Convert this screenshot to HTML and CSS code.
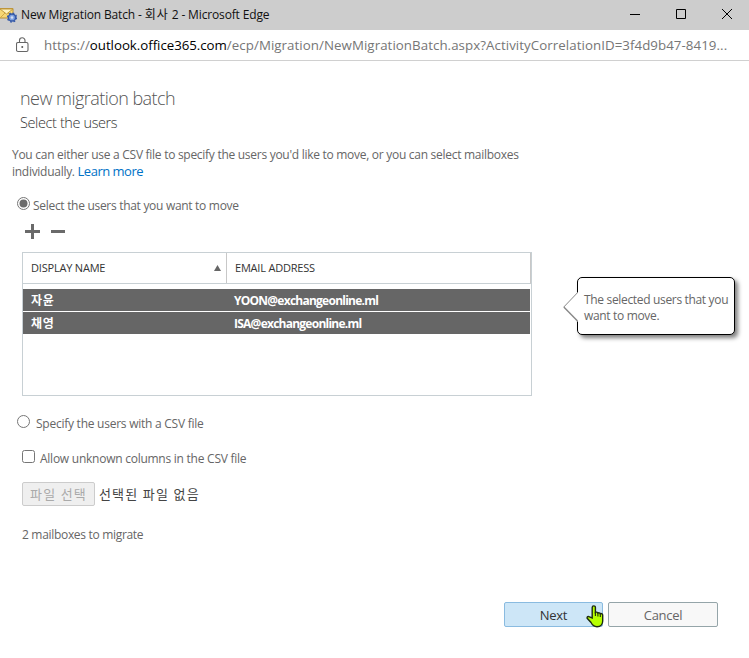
FILE: index.html
```html
<!DOCTYPE html>
<html lang="en">
<head>
<meta charset="utf-8">
<title>New Migration Batch</title>
<link rel="stylesheet" href="styles.css">
</head>
<body>
<header class="titlebar">
  <svg class="app-icon" width="17" height="16" viewBox="0 0 17 16">
    <path d="M-.5 1.500h13.500v9.500H-.5z" fill="#f7d774" stroke="#b89038" stroke-width="1"/>
    <path d="M0 2l6.500 5L13 2z" fill="#fff3bd" stroke="#c29a3c"/>
    <path d="M0 11l5-5M13 11L8 6" stroke="#d0a848" fill="none"/>
    <circle cx="12" cy="10.500" r="3.600" fill="#7fa1df" stroke="#3559a8" stroke-width="1.500"/>
    <circle cx="12" cy="10.500" r="4.500" fill="none" stroke="#3559a8" stroke-width="1.300" stroke-dasharray="1.770 1.770"/>
    <circle cx="12" cy="10.500" r="1.300" fill="#d5dff2"/>
  </svg>
  <span class="window-title">New Migration Batch - <span class="ko">회사</span> 2 - Microsoft Edge</span>
  <svg class="window-controls" width="119" height="30" viewBox="0 0 119 30" fill="none" stroke="#000">
    <path d="M0 14.500h10M46.500 9.500h9v9h-9z"/>
    <path d="M92 9l10 10M102 9L92 19"/>
  </svg>
</header>
<div class="addressbar">
  <svg class="lock" width="13" height="16" viewBox="0 0 13 16" fill="none" stroke="#666">
    <rect x=".5" y="5.500" width="11.500" height="9" rx="1.500" stroke-width="1.100"/>
    <path d="M3.500 5.500V3.500a2.750 2.750 0 0 1 5.500 0v2" stroke-width="1.100"/>
    <circle cx="6.250" cy="10" r="1" fill="#555" stroke="none"/>
  </svg>
  <span class="url">https://<b>outlook.office365.com</b>/ecp/Migration/NewMigrationBatch.aspx?ActivityCorrelationID=3f4d9b47-8419...</span>
</div>
<main class="page">
  <h1>new migration batch</h1>
  <h2>Select the users</h2>
  <p class="intro">You can either use a CSV file to specify the users you'd like to move, or you can select mailboxes<br>individually. <a class="learn">Learn more</a></p>
  <div class="option option-select">
    <svg width="13" height="13" viewBox="0 0 13 13"><circle cx="6.500" cy="6.500" r="6" fill="#fff" stroke="#767676"/><circle cx="6.500" cy="6.500" r="4" fill="#6b6b6b"/></svg>
    <span>Select the users that you want to move</span>
  </div>
  <div class="tools">
    <svg width="41" height="15" viewBox="0 0 41 15" fill="#6a6a6a"><path d="M6 0h3v6h6v3H9v6H6V9H0V6h6zM26 6h14v3H26z"/></svg>
  </div>
  <div class="picker">
    <div class="grid">
      <div class="grid-head">
        <div class="col-name"><span>DISPLAY NAME</span><svg width="7" height="6" viewBox="0 0 7 6"><path d="M3.500 0L7 6H0z" fill="#666"/></svg></div>
        <div class="col-mail"><span>EMAIL ADDRESS</span></div>
      </div>
      <div class="row"><span class="name">자윤</span><span class="mail">YOON@exchangeonline.ml</span></div>
      <div class="row"><span class="name">채영</span><span class="mail">ISA@exchangeonline.ml</span></div>
    </div>
    <aside class="callout">
      <svg class="callout-tip" width="15" height="30" viewBox="0 0 15 30"><path d="M15 0L1 15l14 15z" fill="#fff"/><path d="M14.500 .7L.8 15" fill="none" stroke="#888"/><path d="M.8 15l13.700 14" fill="none" stroke="#888" stroke-width="1.400"/></svg>
      The selected users that you<br>want to move.
    </aside>
  </div>
  <div class="option option-csv">
    <svg width="13" height="13" viewBox="0 0 13 13"><circle cx="6.500" cy="6.500" r="6" fill="#fff" stroke="#767676"/></svg>
    <span>Specify the users with a CSV file</span>
  </div>
  <div class="option option-allow">
    <svg width="13" height="13" viewBox="0 0 13 13"><rect x=".5" y=".5" width="12" height="12" rx="2" fill="#fff" stroke="#767676"/></svg>
    <span>Allow unknown columns in the CSV file</span>
  </div>
  <div class="file"><span class="file-button">파일 선택</span><span class="file-none">선택된 파일 없음</span></div>
  <div class="count">2 mailboxes to migrate</div>
  <footer class="buttons">
    <div class="btn btn-next">Next
      <svg class="hand" width="18" height="23" viewBox="0 0 18 23"><path d="M6.200 13V2.500a1.600 1.600 0 0 1 3.200 0V7.500c1-.7 2-.3 2.500.5 1-.5 2 0 2.300.7 1.400-.5 2.500.3 2.500 1.500V16c0 3-2 5.700-5.700 5.700-3.300 0-4.700-1.700-6-4.200L1.200 13.300c-.5-1.500 1-2.300 2.300-1.500z" fill="#b6ff00" stroke="#1c2b10" stroke-width="1.400"/><path d="M9.400 7v4M11.900 8v3.500M14.300 8.700V12" stroke="#1c2b10" stroke-width="1.100"/></svg>
    </div>
    <div class="btn btn-cancel">Cancel</div>
  </footer>
</main>
</body>
</html>
```
FILE: styles.css
```css
* { box-sizing: border-box; }
body {
  margin: 0;
  width: 749px;
  height: 658px;
  overflow: hidden;
  background: #fff;
  color: #666;
  font: 12px/17px "Open Sans", "Noto Sans CJK KR", sans-serif;
  letter-spacing: -.28px;
  white-space: nowrap;
}
svg { display: block; flex: none; }
.titlebar {
  display: flex;
  align-items: center;
  height: 30px;
  background: #cdcdcd;
  color: #111;
}
.app-icon { margin-top: -1px; }
.window-title { margin: -1px 0 0 4px; font-size: 12px; letter-spacing: -.15px; }
.ko { letter-spacing: 1px; }
.window-controls { margin-left: auto; }
.addressbar {
  display: flex;
  align-items: center;
  height: 31px;
  border-bottom: 1px solid #d0d0d0;
  color: #767676;
}
.lock { margin-left: 16px; }
.url { margin-left: 15px; font-size: 13.300px; letter-spacing: .06px; }
.url b { font-weight: 400; color: #000; letter-spacing: -.04px; }
.page { padding-top: 24px; }
h1, h2 { margin: 0 0 0 20px; font-weight: 300; }
h1 { height: 26px; font-size: 18px; line-height: 26px; color: #555; letter-spacing: -.54px; }
h2 { height: 24px; font-size: 14.500px; line-height: 24px; color: #333; letter-spacing: -.39px; }
.intro { margin: 11px 0 0 12px; height: 34px; }
.learn { color: #0072c6; font-size: 13px; letter-spacing: -.5px; }
.option { display: flex; align-items: flex-start; }
.option-select { margin: 17px 0 0 17px; height: 20px; }
.option-select span { margin: 0 0 0 3px; letter-spacing: -.3px; }
.tools { margin: 7px 0 0 25px; height: 15px; }
.picker { display: flex; margin: 13px 0 0 22px; }
.grid { width: 510px; height: 144px; border: 1px solid #c8d0d4; }
.grid-head { display: flex; height: 31px; margin-bottom: 5px; border-bottom: 1px solid #c8d0d4; border-right: 1px solid #c8c8c8; color: #333; font-size: 11px; line-height: 29px; letter-spacing: -.2px; }
.col-name { display: flex; align-items: center; justify-content: space-between; width: 204px; padding: 0 5px 0 8px; border-right: 1px solid #c8c8c8; }
.col-name span { align-self: flex-start; }
.col-mail { padding-left: 8px; }
.row { display: flex; width: 507px; height: 22px; margin-bottom: 1px; padding-left: 8px; background: #666; color: #fff; font-weight: 700; line-height: 23px; }
.name { width: 203px; letter-spacing: .7px; }
.mail { letter-spacing: -.75px; }
.callout {
  position: relative;
  width: 158px;
  height: 58px;
  margin: 25px 0 0 45px;
  padding: 14px 0 0 6px;
  border: 1px solid #000;
  border-radius: 5px;
  background: #fff;
  box-shadow: 3px 3px 4px rgba(0, 0, 0, .5);
  line-height: 16px;
  letter-spacing: -.33px;
}
.callout-tip { position: absolute; left: -15px; top: 14px; }
.option-csv { margin: 19px 0 0 17px; height: 21px; }
.option-csv span { margin: 0 0 0 6px; }
.option-allow { margin: 14px 0 0 22px; height: 19px; }
.option-allow span { margin: 0 0 0 5px; }
.option-csv span, .option-allow span { letter-spacing: -.25px; }
.file { display: flex; align-items: center; height: 24px; margin: 13px 0 0 22px; font-size: 13px; letter-spacing: 1.150px; color: #444; }
.file-button { width: 73px; height: 24px; border: 1px solid #ccc; border-radius: 2px; background: #efefef; color: #aaa; line-height: 22px; text-align: center; }
.file-none { margin-left: 4px; }
.count { margin: 20px 0 0 22px; height: 18px; letter-spacing: -.31px; }
.buttons { display: flex; gap: 5px; margin: 58px 0 0 504px; font-size: 13px; }
.btn { position: relative; height: 25px; border: 1px solid #95a5a9; border-radius: 2px; background: #f8f8f8; line-height: 24px; text-align: center; }
.btn-next { width: 99px; border-color: #8abbe0; background: #cde6f7; color: #333; }
.btn-cancel { width: 110px; }
.hand { position: absolute; left: 81px; top: 2px; }
```
